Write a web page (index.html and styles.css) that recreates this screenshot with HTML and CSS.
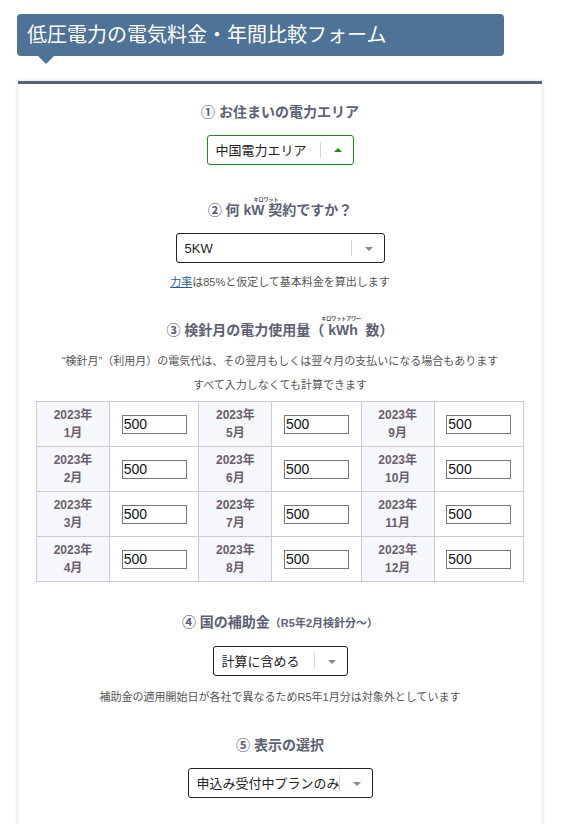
FILE: index.html
```html
<!DOCTYPE html>
<html lang="ja">
<head>
    <meta charset="UTF-8">
    <meta name="viewport" content="width=device-width, initial-scale=1.0">
    <title>低圧電力の電気料金・年間比較フォーム</title>
    <link rel="stylesheet" href="styles.css">
</head>
<body>
    <h2 class="title">低圧電力の電気料金・年間比較フォーム</h2>

    <form class="card" id="compareForm">
        <section class="step">
            <h3>① お住まいの電力エリア</h3>
            <div class="select open">
                <select id="area">
                    <option>中国電力エリア</option>
                </select>
                <span class="arrow"></span>
            </div>
        </section>

        <section class="step">
            <h3 class="with-ruby">② 何 <span class="rb">kW<span class="rt rt-kw">キロワット</span></span> 契約ですか？</h3>
            <div class="select w-kw">
                <select id="kw">
                    <option>5KW</option>
                </select>
                <span class="arrow"></span>
            </div>
            <p class="note"><a href="#">力率</a>は85%と仮定して基本料金を算出します</p>
        </section>

        <section class="step">
            <h3 class="tight">③ 検針月の電力使用量（&nbsp;<span class="rb">kWh<span class="rt rt-kwh">キロワットアワー</span></span>&nbsp; 数）</h3>
            <p class="note lead">“検針月”（利用月）の電気代は、その翌月もしくは翌々月の支払いになる場合もあります</p>
            <p class="note lead">すべて入力しなくても計算できます</p>
            <table class="usage">
                <tr>
                    <th>2023年<br>1月</th><td><input type="text" value="500"></td>
                    <th>2023年<br>5月</th><td><input type="text" value="500"></td>
                    <th>2023年<br>9月</th><td><input type="text" value="500"></td>
                </tr>
                <tr>
                    <th>2023年<br>2月</th><td><input type="text" value="500"></td>
                    <th>2023年<br>6月</th><td><input type="text" value="500"></td>
                    <th>2023年<br>10月</th><td><input type="text" value="500"></td>
                </tr>
                <tr>
                    <th>2023年<br>3月</th><td><input type="text" value="500"></td>
                    <th>2023年<br>7月</th><td><input type="text" value="500"></td>
                    <th>2023年<br>11月</th><td><input type="text" value="500"></td>
                </tr>
                <tr>
                    <th>2023年<br>4月</th><td><input type="text" value="500"></td>
                    <th>2023年<br>8月</th><td><input type="text" value="500"></td>
                    <th>2023年<br>12月</th><td><input type="text" value="500"></td>
                </tr>
            </table>
        </section>

        <section class="step">
            <h3>④ 国の補助金<small>（R5年2月検針分〜）</small></h3>
            <div class="select w-sub">
                <select id="subsidy">
                    <option>計算に含める</option>
                </select>
                <span class="arrow"></span>
            </div>
            <p class="note loose">補助金の適用開始日が各社で異なるためR5年1月分は対象外としています</p>
        </section>

        <section class="step">
            <h3>⑤ 表示の選択</h3>
            <div class="select w-view">
                <select id="view">
                    <option>申込み受付中プランのみ</option>
                </select>
                <span class="arrow"></span>
            </div>
        </section>
    </form>
</body>
</html>
```

FILE: styles.css
```css
body {
    font-family: "Liberation Sans", "Noto Sans CJK JP", sans-serif;
    background-color: #fff;
    margin: 0;
    padding: 14px 0 0;
    color: #333;
}
.title {
    position: relative;
    margin: 0 58px 0 17px;
    height: 42px;
    line-height: 42px;
    padding: 0 10px;
    background: #4e7397;
    color: #fff;
    font-size: 20px;
    font-weight: normal;
    border-radius: 4px;
}
/* 吹き出しの三角 */
.title::after {
    content: "";
    position: absolute;
    left: 21px;
    bottom: -8px;
    border-left: 8px solid transparent;
    border-right: 8px solid transparent;
    border-top: 8px solid #4e7397;
}
.card {
    margin: 25px 20px 0 18px;
    border-top: 3px solid #5a6078;
    box-shadow: 0 0 4px rgba(0, 0, 0, 0.15);
    padding: 17px 18px 30px;
    text-align: center;
    min-height: 760px;
}
.step {
    margin-bottom: 29px;
}
.step h3 {
    margin: 0 0 12px;
    font-size: 14px;
    font-weight: bold;
    color: #5d6174;
    line-height: 22px;
}
.step h3.with-ruby {
    padding-top: 5px;
}
.step h3.tight {
    margin-bottom: 8px;
}
.step h3 small {
    font-size: 11px;
}
/* ふりがな */
.rb {
    position: relative;
}
.rt {
    position: absolute;
    font-size: 5px;
    line-height: 1;
    white-space: nowrap;
    color: #444;
}
.rt-kw {
    left: 10px;
    top: -5px;
}
.rt-kwh {
    left: -7px;
    top: -6px;
}
.select {
    display: inline-flex;
    align-items: center;
    height: 30px;
    width: 147px;
    border: 1px solid #222;
    border-radius: 3px;
    box-sizing: border-box;
    background: #fff;
}
.select.open {
    border-color: #1e8a1e;
}
.select select {
    flex: 1;
    min-width: 0;
    height: 100%;
    border: none;
    background: transparent;
    appearance: none;
    -webkit-appearance: none;
    font-family: inherit;
    font-size: 13px;
    color: #222;
    padding: 0 0 0 8px;
    outline: none;
}
.select .arrow {
    position: relative;
    width: 32px;
    height: 16px;
    border-left: 1px solid #d6d6d6;
}
.select .arrow::after {
    content: "";
    position: absolute;
    left: 13px;
    top: 7px;
    border-left: 4px solid transparent;
    border-right: 4px solid transparent;
    border-top: 4px solid #888;
}
.select.open .arrow::after {
    top: 6px;
    border-top: none;
    border-bottom: 4px solid #1e8a1e;
}
.w-kw { width: 209px; }
.w-sub { width: 135px; }
.w-view { width: 185px; }
.note {
    margin: 11px 0 0;
    font-size: 11px;
    line-height: 16px;
    color: #555;
}
.note.loose {
    margin-top: 13px;
}
.note a {
    color: #1f5c99;
}
.note.lead {
    margin: 0;
    line-height: 24px;
}
.usage {
    width: 100%;
    border-collapse: collapse;
    margin-top: 4px;
}
.usage th,
.usage td {
    border: 1px solid #ccc;
    height: 44px;
    padding: 0;
}
.usage th {
    width: 72px;
    background: #f6f7fc;
    color: #6a5e6e;
    font-size: 12px;
    line-height: 18px;
}
.usage input {
    width: 65px;
    height: 19px;
    box-sizing: border-box;
    border: 1px solid #777;
    padding: 0 1px;
    font-family: "Liberation Sans", sans-serif;
    font-size: 14px;
    color: #111;
}
```
